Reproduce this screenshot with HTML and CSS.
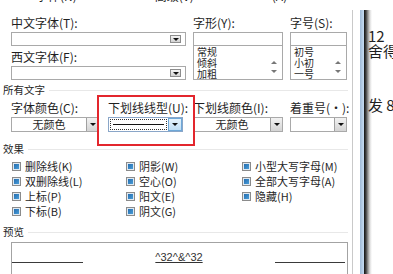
FILE: index.html
```html
<!DOCTYPE html>
<html lang="zh-CN">
<head>
    <meta charset="UTF-8">
    <meta name="viewport" content="width=device-width, initial-scale=1.0">
    <title>字体</title>
    <link rel="stylesheet" href="styles.css">
</head>
<body>
    <div class="screen">
        <div class="dialog">
            <div class="tabs"><span>字体(N)</span><span>高级(V)</span><span>(A)</span></div>

            <!-- Шрифт, начертание, размер -->
            <div class="font-grid">
                <div>
                    <div class="label">中文字体(T):</div>
                    <div class="combo combo-font"><span class="mini-btn"><i class="tri"></i></span></div>
                    <div class="label label-second">西文字体(F):</div>
                    <div class="combo combo-font"><span class="mini-btn"><i class="tri"></i></span></div>
                </div>
                <div>
                    <div class="label">字形(Y):</div>
                    <div class="text-input"></div>
                    <div class="list">
                        <div class="list-items"><div>常规</div><div>倾斜</div><div>加粗</div></div>
                        <div class="scroll"><i class="tri tri-up"></i><i class="tri tri-gray"></i></div>
                    </div>
                </div>
                <div>
                    <div class="label">字号(S):</div>
                    <div class="text-input"></div>
                    <div class="list">
                        <div class="list-items"><div>初号</div><div>小初</div><div>一号</div></div>
                        <div class="scroll"><i class="tri tri-up"></i><i class="tri tri-gray"></i></div>
                    </div>
                </div>
            </div>

            <div class="group-title group-all">所有文字</div>
            <div class="attr-row">
                <div class="field field-color">
                    <div class="label">字体颜色(C):</div>
                    <div class="combo-drop">
                        <span class="combo-value">无颜色</span>
                        <span class="drop-btn"><i class="tri"></i></span>
                    </div>
                </div>
                <div class="field field-uline">
                    <div class="label">下划线线型(U):</div>
                    <div class="combo-drop combo-focus">
                        <span class="uline-sample"><span class="uline"></span></span>
                        <span class="drop-btn drop-btn-hot"><i class="tri"></i></span>
                    </div>
                    <div class="mark-box"></div>
                </div>
                <div class="field field-ucolor">
                    <div class="label">下划线颜色(I):</div>
                    <div class="combo-drop">
                        <span class="combo-value">无颜色</span>
                        <span class="drop-btn"><i class="tri"></i></span>
                    </div>
                </div>
                <div class="field field-mark">
                    <div class="label">着重号(·):</div>
                    <div class="combo-drop">
                        <span class="combo-value"></span>
                        <span class="drop-btn"><i class="tri"></i></span>
                    </div>
                </div>
            </div>

            <div class="group-title group-effects">效果</div>
            <div class="effects">
                <div class="check"><span class="box"></span>删除线(K)</div>
                <div class="check"><span class="box"></span>双删除线(L)</div>
                <div class="check"><span class="box"></span>上标(P)</div>
                <div class="check"><span class="box"></span>下标(B)</div>
                <div class="check"><span class="box"></span>阴影(W)</div>
                <div class="check"><span class="box"></span>空心(O)</div>
                <div class="check"><span class="box"></span>阳文(E)</div>
                <div class="check"><span class="box"></span>阴文(G)</div>
                <div class="check"><span class="box"></span>小型大写字母(M)</div>
                <div class="check"><span class="box"></span>全部大写字母(A)</div>
                <div class="check"><span class="box"></span>隐藏(H)</div>
            </div>

            <div class="group-title group-preview">预览</div>
            <div class="preview">
                <span class="pv-line"></span>
                <span class="pv-text">^32^&amp;^32</span>
                <span class="pv-line pv-line-right"></span>
            </div>
        </div>

        <div class="side">
            <div class="side-line"></div>
            <div class="side-gap"></div>
            <div class="side-blue"></div>
            <div class="doc">
                <div class="doc-line">12</div>
                <div class="doc-line">舍得</div>
                <div class="doc-line doc-far">发 8</div>
            </div>
        </div>
    </div>
</body>
</html>
```

FILE: styles.css
```css
* {
    box-sizing: border-box;
}

body {
    margin: 0;
    width: 393px;
    height: 274px;
    overflow: hidden;
    background-color: #fff;
    color: #1f1f1f;
    font-family: "Noto Sans CJK SC", "Noto Sans", sans-serif;
    font-size: 12px;
}

.screen {
    display: flex;
    height: 274px;
}

.dialog {
    width: 352px;
    flex: none;
}

.tabs {
    height: 8px;
    overflow: hidden;
    display: flex;
    gap: 78px;
    padding-left: 36px;
    line-height: 12px;
}

.tabs span {
    margin-top: -10px;
}

.font-grid {
    display: grid;
    grid-template-columns: 175px 90px 57px;
    column-gap: 7px;
    padding: 8px 0 0 11px;
}

.label {
    height: 14px;
    line-height: 14px;
    white-space: nowrap;
}

.label-second {
    margin-top: 4px;
}

.combo {
    display: flex;
    align-items: center;
    height: 14px;
    margin-top: 2px;
    border: 1px solid #a9a9a9;
    background-color: #fff;
}

.combo-font {
    justify-content: flex-end;
    padding-right: 4px;
}

.mini-btn {
    width: 11px;
    height: 8px;
    display: flex;
    align-items: center;
    justify-content: center;
    border: 1px solid #8d8d8d;
    background: linear-gradient(#f4f4f4, #d2d2d2);
}

.tri {
    display: block;
    width: 0;
    height: 0;
    border-left: 3px solid transparent;
    border-right: 3px solid transparent;
    border-top: 3px solid #111;
}

.tri-up {
    border-top: 0;
    border-bottom: 3px solid #777;
}

.tri-gray {
    border-top-color: #777;
}

.text-input {
    height: 14px;
    margin-top: 2px;
    border: 1px solid #a9a9a9;
}

.list {
    display: flex;
    height: 35px;
    margin-top: -1px;
    border: 1px solid #a9a9a9;
}

.list-items {
    flex: 1;
    padding: 0 0 0 3px;
    font-size: 10px;
    line-height: 11px;
}

.scroll {
    width: 12px;
    margin-right: 2px;
    display: flex;
    flex-direction: column;
    align-items: center;
    gap: 6px;
    padding-top: 15px;
}

.group-title {
    display: flex;
    align-items: center;
    gap: 4px;
    width: 348px;
    height: 14px;
    padding-left: 3px;
    line-height: 14px;
    font-size: 10.5px;
}

.group-title::after {
    content: "";
    flex: 1;
    height: 1px;
    background-color: #e8e8e8;
}

.group-all {
    margin-top: 3px;
}

.group-effects {
    margin-top: 10px;
}

.group-preview {
    margin-top: 6px;
}

.attr-row {
    display: flex;
    padding-left: 11px;
    margin-top: 4px;
}

.field {
    flex: none;
}

.field-color {
    width: 88px;
}

.field-uline {
    width: 75px;
    margin-left: 9px;
    position: relative;
}

.field-ucolor {
    width: 90px;
    margin-left: 10px;
}

.field-mark {
    width: 57px;
    margin-left: 7px;
}

.combo-drop {
    display: flex;
    height: 15px;
    margin-top: 2px;
    border: 1px solid #a9a9a9;
    background-color: #fff;
}

.combo-value {
    flex: 1;
    text-align: center;
    font-size: 11px;
    line-height: 13px;
}

.drop-btn {
    width: 12px;
    display: flex;
    align-items: center;
    justify-content: center;
    border-left: 1px solid #a0a0a0;
    background: linear-gradient(#f2f2f2, #d4d4d4);
}

.combo-focus {
    border-color: #8aa6c8;
    padding: 1px 0 1px 1px;
}

.uline-sample {
    flex: 1;
    display: flex;
    align-items: center;
    padding: 0 2px;
    margin-right: 1px;
    border: 1px dotted #333;
}

.uline {
    flex: 1;
    height: 1px;
    background-color: #111;
}

.drop-btn-hot {
    margin: -1px 0;
    width: 14px;
    border: 1px solid #6ea8d8;
    background: linear-gradient(#e6f3fc, #c0def5);
}

.mark-box {
    position: absolute;
    left: -11px;
    top: -6px;
    width: 98px;
    height: 51px;
    border: 2px solid #e3262d;
}

.effects {
    display: grid;
    grid-template-columns: 114px 116px auto;
    grid-template-rows: repeat(4, 15px);
    grid-auto-flow: column;
    padding-left: 12px;
    margin-top: 3px;
}

.check {
    display: flex;
    align-items: center;
    gap: 4px;
    font-size: 11px;
    line-height: 15px;
    white-space: nowrap;
}

.box {
    width: 9px;
    height: 9px;
    flex: none;
    border: 1px solid #8b8b8b;
    background: linear-gradient(135deg, #1f63a8, #4ea6df);
    box-shadow: inset 0 0 0 1px #dfe9f2;
}

.preview {
    display: flex;
    align-items: flex-start;
    width: 337px;
    height: 40px;
    margin: 3px 0 0 11px;
    padding-top: 7px;
    border: 1px solid #a3a3a3;
}

.pv-line {
    width: 71px;
    height: 1px;
    margin-top: 12px;
    background-color: #3a3a3a;
}

.pv-line-right {
    width: 70px;
    margin-right: 2px;
}

.pv-text {
    flex: 1;
    text-align: center;
    font-family: "Liberation Sans", sans-serif;
    font-size: 11px;
    line-height: 14px;
    color: #333;
    text-decoration: underline;
}

.side {
    flex: 1;
    display: flex;
    padding-top: 10px;
}

.side-line {
    width: 1px;
    background-color: #c9c9c9;
}

.side-gap {
    width: 7px;
}

.side-blue {
    width: 4px;
    background: linear-gradient(to right, #9fb9d6, #c6dcf2);
}

.doc {
    flex: 1;
    padding: 18px 0 0 4px;
    overflow: hidden;
    white-space: nowrap;
    background: linear-gradient(to right, #111 0, #444 2px, #999 4px, #e0e0e0 6px, #fff 8px);
    font-size: 15px;
    line-height: 15px;
}

.doc-far {
    margin-top: 39px;
}
```
